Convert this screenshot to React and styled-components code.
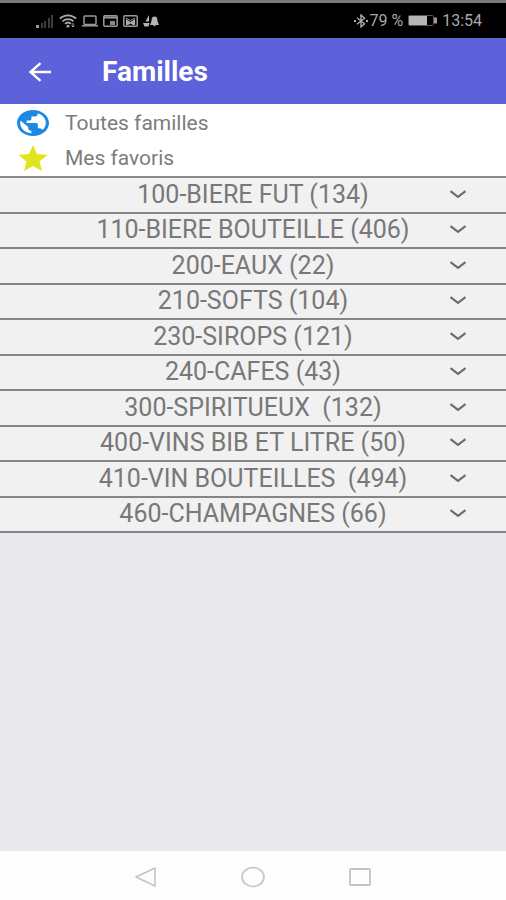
import React, { useState } from 'react';
import styled, { createGlobalStyle } from 'styled-components';

const GlobalStyle = createGlobalStyle`
	* { box-sizing: border-box; }
	body { margin: 0; background: #e9e8ed; font-family: Roboto, "Liberation Sans", sans-serif; }
	button { font: inherit; color: inherit; background: none; border: none; padding: 0; margin: 0; cursor: pointer; }
`

const Screen = styled.div`
	display: flex; flex-direction: column; min-height: 100vh;
`
const StatusBar = styled.div`
	display: flex; align-items: center; justify-content: space-between;
	height: 38px; padding: 0 24px 0 36px;
	background: #000; border-top: 3px solid #7b7b7b;
	color: #a8a8a8; font-size: 16px;
`
const StatusGroup = styled.div`
	display: flex; align-items: center; gap: ${props => props.$gap}px;
	svg { display: block; }
`
const Header = styled.header`
	display: flex; align-items: center; gap: 50px;
	height: 66px; padding: 2px 28px 0;
	background: #5d62da; color: #fff;
	h1 { margin: 0; font-size: 28px; font-weight: 700; line-height: 32px; }
	svg { display: block; }
`
const Shortcuts = styled.nav`
	display: flex; flex-direction: column;
	padding-bottom: 2px; background: #fff;
`
const Shortcut = styled.button`
	&& {
		display: flex; align-items: center; gap: 16px;
		height: 35px; padding: 3px 17px 0;
		color: #7c7c7c; font-size: 21px; text-align: left;
	}
	svg { display: block; }
`
const FamilyList = styled.ul`
	display: grid; grid-auto-rows: 1fr;
	min-height: 357px; margin: 0; padding: 0; list-style: none;
	background: #f1f1f1; border-top: 2px solid #8a8a8a;
	li { display: grid; border-bottom: 2px solid #858585; }
`
const FamilyRow = styled.button`
	&& {
		display: grid; grid-template-columns: 32px 1fr 32px; align-items: center;
		padding: 0 32px; color: #787878; font-size: 25px; line-height: 28px;
	}
	span { grid-column: 2; white-space: pre; text-align: center; }
	svg { justify-self: center; transform: ${props => (props.$open ? 'rotate(180deg)' : 'none')}; }
`
const NavBar = styled.div`
	display: flex; align-items: center; justify-content: center; gap: 84px;
	height: 49px; margin-top: auto; padding-top: 2px; background: #fdfdfd;
	svg { display: block; }
`

const families = [
	'100-BIERE FUT (134)',
	'110-BIERE BOUTEILLE (406)',
	'200-EAUX (22)',
	'210-SOFTS (104)',
	'230-SIROPS (121)',
	'240-CAFES (43)',
	'300-SPIRITUEUX  (132)',
	'400-VINS BIB ET LITRE (50)',
	'410-VIN BOUTEILLES  (494)',
	'460-CHAMPAGNES (66)',
]

const SignalIcon = () => (
	<svg width="18" height="14" viewBox="0 0 18 14">
		<path d="M0 11h3v3H0z" fill="#999" />
		<path d="M5 9h2v5H5zM8 7h2v7H8zM12 4h2v10h-2zM15 1h2v13h-2z" fill="#3c3c3c" />
	</svg>
)

const WifiIcon = () => (
	<svg width="18" height="14" viewBox="0 0 18 14" fill="none" stroke="#aaa" strokeWidth="1.8">
		<path d="M.8 4.6C5.5.2 12.5.2 17.2 4.6M3.5 7.3c3.2-2.9 7.8-2.9 11 0M6 9.8c1.8-1.6 4.2-1.6 6 0" />
		<path d="M9 10.5l2 1.800-2 1.500-2-1.500z" fill="#aaa" stroke="none" />
		<path d="M14 9v4M12.500 11.500L14 13l1.500-1.500" strokeWidth="1" />
	</svg>
)

const LaptopIcon = () => (
	<svg width="16" height="12" viewBox="0 0 16 12" fill="none" stroke="#999" strokeWidth="1.5">
		<rect x="2" y="1" width="12" height="8.5" rx="1" />
		<path d="M0 10.8h16" />
	</svg>
)

const WindowIcon = () => (
	<svg width="15" height="12" viewBox="0 0 15 12" fill="none" stroke="#999" strokeWidth="1.5">
		<rect x=".8" y=".8" width="13.4" height="10.4" rx="1" />
		<path d="M1 2.500h13" strokeWidth="2" />
		<path d="M7 6h5v4H7z" fill="#888" stroke="none" />
	</svg>
)

const MailIcon = () => (
	<svg width="15" height="12" viewBox="0 0 15 12">
		<rect x=".8" y=".8" width="13.4" height="10.4" rx="1" fill="none" stroke="#999" strokeWidth="1.5" />
		<path d="M3 10V4l4.500 3L12 4v6z" fill="#aaa" />
		<path d="M3 3l4.500 2.500L12 3" fill="none" stroke="#999" />
		<path d="M5 10l2.500-1.500L10 10z" fill="#000" />
	</svg>
)

const AlertsIcon = () => (
	<svg width="16" height="12" viewBox="0 0 16 12" fill="#b5b5b5">
		<path d="M6 0v6.500H2.500zM0 8h6.500l-1 3.500H1.500z" />
		<path d="M11.500 1.500c2.300 0 3 2 3 4.500l1.500 4h-3l-1.500 1.500L10 10H7l1.500-4c0-2.500.7-4.500 3-4.500z" />
	</svg>
)

const BluetoothIcon = () => (
	<svg width="14" height="14" viewBox="0 0 14 14" fill="none" stroke="#aaa" strokeWidth="1.4">
		<path d="M3 3.800l7.500 6L7 13V1l3.500 3.200-7.500 6" />
		<path d="M0 7h2M12 7h2" strokeWidth="2" />
	</svg>
)

const BatteryIcon = () => (
	<svg width="29" height="11" viewBox="0 0 29 11">
		<rect x=".5" y=".5" width="25" height="10" rx="1" fill="none" stroke="#555" />
		<rect x="1" y="1" width="18" height="9" fill="#b5b5b5" />
		<path d="M26 2.500h3v6h-3z" fill="#999" />
	</svg>
)

const BackIcon = () => (
	<svg width="24" height="20" viewBox="0 0 24 20" fill="none" stroke="#fff" strokeWidth="2.4">
		<path d="M23 10H3M12.500 1.200L2.500 10l10 8.800" />
	</svg>
)

const GlobeIcon = () => (
	<svg width="32" height="26" viewBox="2 2 20 20" preserveAspectRatio="none">
		<path fill="#1e88e5" d="M12 2C6.480 2 2 6.480 2 12s4.480 10 10 10 10-4.480 10-10S17.520 2 12 2zm-1 17.930c-3.950-.490-7-3.850-7-7.930 0-.620.080-1.210.210-1.790L9 15v1c0 1.100.9 2 2 2v1.930zm6.900-2.540c-.260-.810-1-1.390-1.900-1.390h-1v-3c0-.550-.450-1-1-1H8v-2h2c.550 0 1-.450 1-1V7h2c1.100 0 2-.9 2-2v-.410c2.930 1.190 5 4.060 5 7.410 0 2.080-.8 3.970-2.100 5.390z" />
	</svg>
)

const StarIcon = () => (
	<svg width="32" height="26" viewBox="1 2 22 19" preserveAspectRatio="none">
		<path fill="#e0e41c" d="M12 17.270L18.180 21l-1.640-7.030L22 9.240l-7.190-.610L12 2 9.190 8.630 2 9.240l5.460 4.730L5.820 21z" />
	</svg>
)

const ChevronIcon = () => (
	<svg width="18" height="10" viewBox="0 0 18 10" fill="none" stroke="#6c6c6c" strokeWidth="2.2">
		<path d="M1.500 1.200L9 6.800l7.500-5.600" />
	</svg>
)

const BackKey = () => (
	<svg width="22" height="20" viewBox="0 0 22 20" fill="none" stroke="#c4c4c4" strokeWidth="1.6" strokeLinejoin="round">
		<path d="M20 1v18L1 10z" />
	</svg>
)

const HomeKey = () => (
	<svg width="24" height="22" viewBox="0 0 24 22" fill="none" stroke="#c4c4c4" strokeWidth="1.6">
		<ellipse cx="12" cy="11" rx="11" ry="9.5" />
	</svg>
)

const RecentKey = () => (
	<svg width="22" height="20" viewBox="0 0 22 20" fill="none" stroke="#c4c4c4" strokeWidth="1.8">
		<rect x="1" y="2" width="20" height="16" rx="1" />
	</svg>
)

const App = () => {
	const [open, setOpen] = useState(null)

	return (
		<Screen>
			<GlobalStyle />
			<StatusBar>
				<StatusGroup $gap={5}>
					<SignalIcon />
					<WifiIcon />
					<LaptopIcon />
					<WindowIcon />
					<MailIcon />
					<AlertsIcon />
				</StatusGroup>
				<StatusGroup $gap={5}>
					<StatusGroup $gap={1}>
						<BluetoothIcon />
						<span>79 %</span>
					</StatusGroup>
					<BatteryIcon />
					<span>13:54</span>
				</StatusGroup>
			</StatusBar>
			<Header>
				<button type='button' aria-label='Retour'><BackIcon /></button>
				<h1>Familles</h1>
			</Header>
			<Shortcuts>
				<Shortcut type='button'><GlobeIcon />Toutes familles</Shortcut>
				<Shortcut type='button'><StarIcon />Mes favoris</Shortcut>
			</Shortcuts>
			<FamilyList>
				{families.map(name => (
					<li key={name}>
						<FamilyRow
							type='button'
							$open={open === name}
							aria-expanded={open === name}
							onClick={() => setOpen(open === name ? null : name)}
						>
							<span>{name}</span>
							<ChevronIcon />
						</FamilyRow>
					</li>
				))}
			</FamilyList>
			<NavBar>
				<button type='button' aria-label='Précédent'><BackKey /></button>
				<button type='button' aria-label='Accueil'><HomeKey /></button>
				<button type='button' aria-label='Applications récentes'><RecentKey /></button>
			</NavBar>
		</Screen>
	)
}

export default App
